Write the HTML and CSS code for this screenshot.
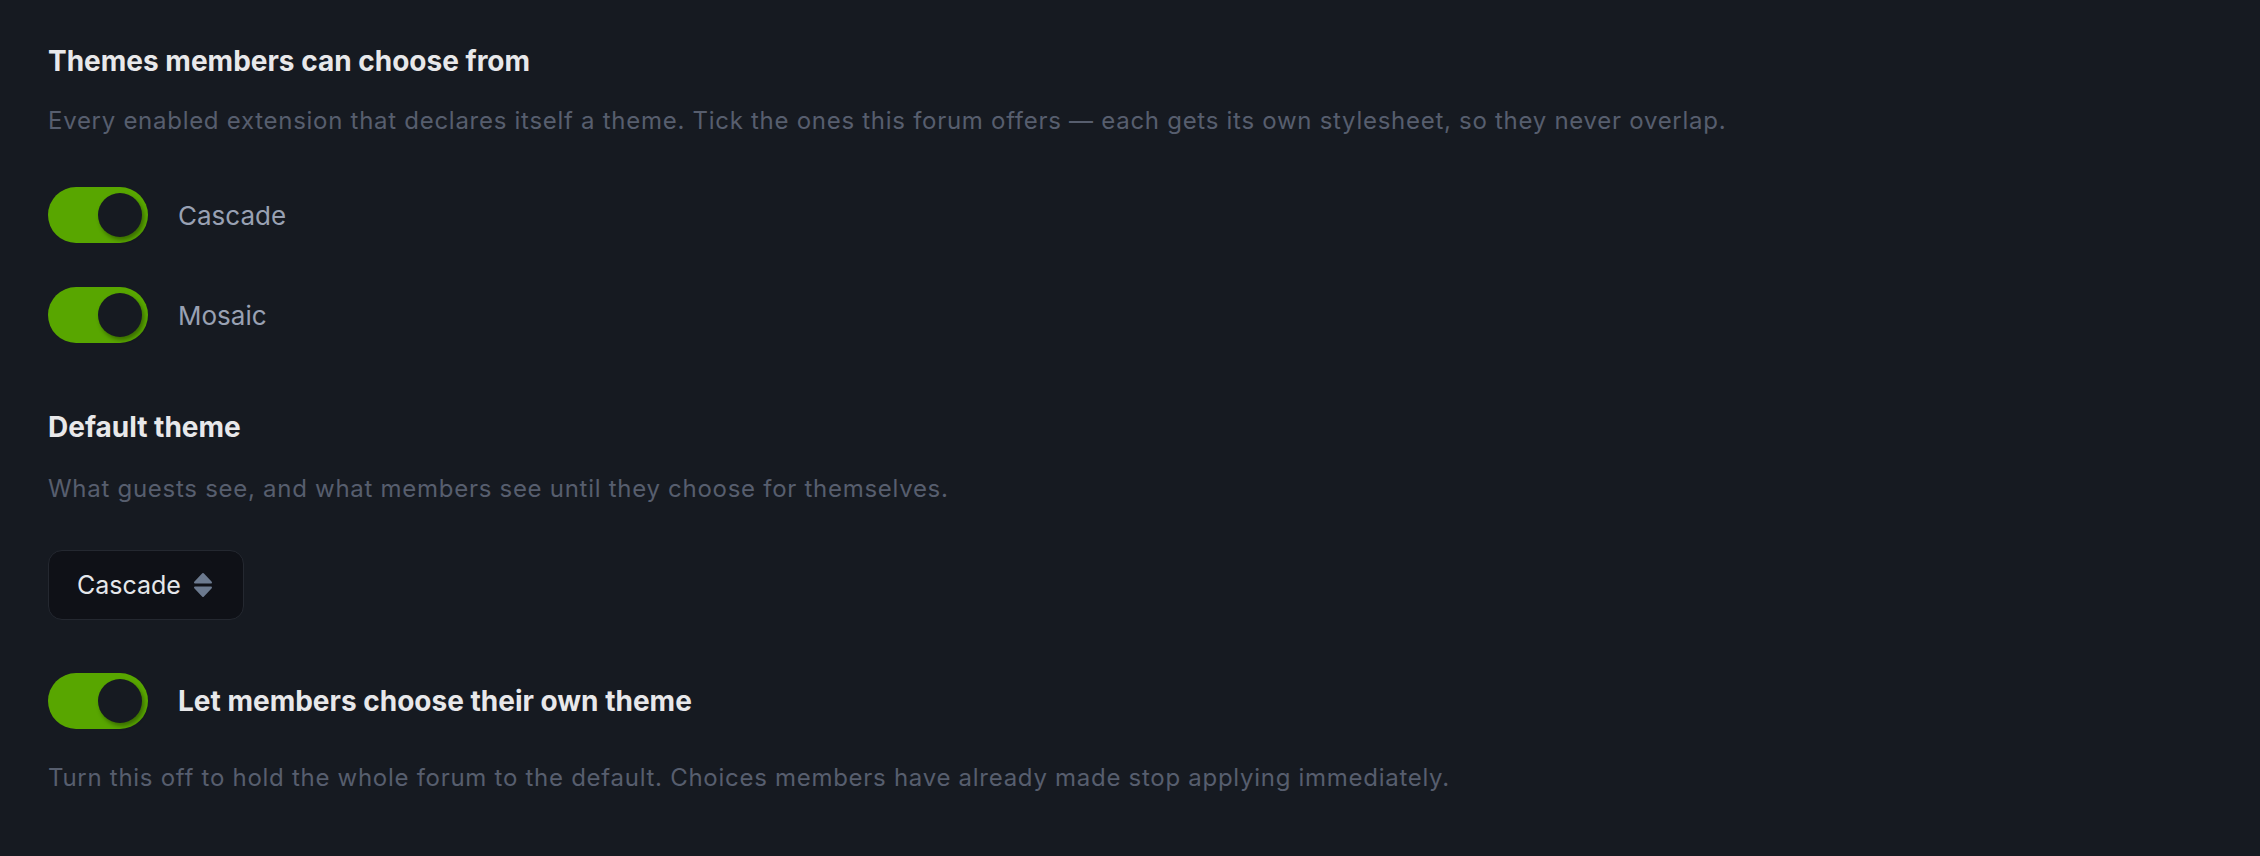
FILE: index.html
```html
<!DOCTYPE html>
<html lang="en">
<head>
    <meta charset="UTF-8">
    <meta name="viewport" content="width=device-width, initial-scale=1.0">
    <title>Theme settings</title>
    <link rel="stylesheet" href="styles.css">
</head>
<body>
    <main class="settings">
        <section class="field">
            <h2 class="field-title">Themes members can choose from</h2>
            <p class="field-help">Every enabled extension that declares itself a theme. Tick the ones this forum offers — each gets its own stylesheet, so they never overlap.</p>

            <div class="choice-list">
                <label class="switch-row">
                    <span class="switch is-on"><span class="knob"></span></span>
                    <span class="switch-label">Cascade</span>
                </label>
                <label class="switch-row">
                    <span class="switch is-on"><span class="knob"></span></span>
                    <span class="switch-label">Mosaic</span>
                </label>
            </div>
        </section>

        <section class="field field-default">
            <h2 class="field-title">Default theme</h2>
            <p class="field-help">What guests see, and what members see until they choose for themselves.</p>

            <div class="select">
                <span class="select-value">Cascade</span>
                <svg class="select-arrows" width="20" height="26" viewBox="0 0 20 26">
                    <path d="M10 2 L18 10.5 H2 Z" />
                    <path d="M2 15.5 H18 L10 24 Z" />
                </svg>
            </div>

            <label class="switch-row switch-row-main">
                <span class="switch is-on"><span class="knob"></span></span>
                <span class="switch-label switch-label-strong">Let members choose their own theme</span>
            </label>
            <p class="field-help field-help-after">Turn this off to hold the whole forum to the default. Choices members have already made stop applying immediately.</p>
        </section>
    </main>
</body>
</html>
```

FILE: styles.css
```css
body {
    margin: 0;
    background-color: #161a21;
    font-family: Inter, "Noto Sans", sans-serif;
}
.settings {
    padding: 43px 48px 40px;
}
.field-title {
    margin: 0;
    font-size: 28px;
    line-height: 36px;
    font-weight: 700;
    color: #e8e8ea;
}
.field-help {
    margin: 26px 0 0;
    font-size: 24px;
    line-height: 32px;
    letter-spacing: 0.72px;
    color: #575e6e;
}
.choice-list {
    display: flex;
    flex-direction: column;
    gap: 44px;
    margin-top: 50px;
}
.switch-row {
    display: flex;
    align-items: center;
    gap: 30px;
    cursor: pointer;
}
.switch {
    display: flex;
    align-items: center;
    width: 100px;
    height: 56px;
    padding: 6px;
    box-sizing: border-box;
    border-radius: 28px;
    background-color: #374151;
}
.switch.is-on {
    background-color: #58a600;
    justify-content: flex-end;
}
.knob {
    width: 44px;
    height: 44px;
    border-radius: 50%;
    background-color: #161a21;
    box-shadow: 2px 3px 4px rgba(0, 0, 0, 0.35);
}
.switch-label {
    font-size: 26px;
    color: #99a1b3;
}
.switch-label-strong {
    font-weight: 700;
    font-size: 28px;
    color: #e8e8ea;
}
.field-default {
    margin-top: 66px;
}
.field-default .field-help {
    margin-top: 28px;
}
.select {
    display: inline-flex;
    align-items: center;
    gap: 12px;
    height: 70px;
    margin-top: 45px;
    padding: 0 30px 0 28px;
    box-sizing: border-box;
    border: 1px solid #242830;
    border-radius: 14px;
    background-color: #0f1117;
    font-size: 25px;
    color: #e5e7eb;
}
.select-arrows path {
    fill: #6c7a8f;
    stroke: #6c7a8f;
    stroke-width: 2;
    stroke-linejoin: round;
}
.switch-row-main {
    margin-top: 53px;
}
.field-default .field-help-after {
    margin-top: 33px;
}
```
